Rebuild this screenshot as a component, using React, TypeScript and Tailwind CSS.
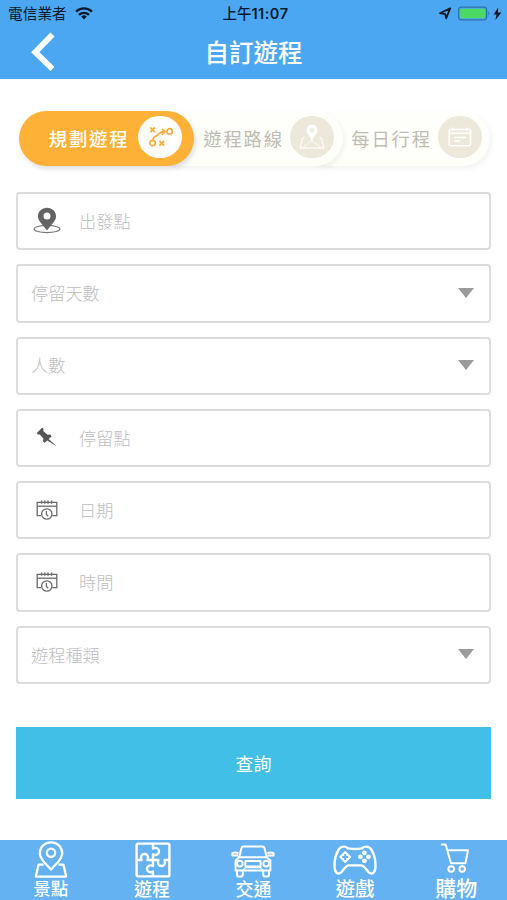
import React from 'react';

const BackIcon = () => (
  <svg width="24" height="40" viewBox="0 0 24 40" fill="none" stroke="white" strokeWidth="5.8">
    <path d="M21.5 2.5 L4.2 20.2 L21.5 37" />
  </svg>
);

const WifiIcon = () => (
  <svg width="18" height="13" viewBox="0 0 18 13" fill="none" stroke="#0b1a2a" strokeWidth="2.3">
    <path d="M1 4.6 A11.5 11.5 0 0 1 17 4.6" />
    <path d="M4 7.8 A7.2 7.2 0 0 1 14 7.8" />
    <path d="M9 12.4 L6.2 9.6 A4 4 0 0 1 11.8 9.6 Z" fill="#0b1a2a" stroke="none" />
  </svg>
);

const StatusIcons = () => (
  <svg width="64" height="16" viewBox="0 0 64 16">
    <path d="M1 7.2 L11.2 2.4 L7.2 12.2 L6.2 8.2 Z" fill="none" stroke="#0b1a2a" strokeWidth="1.8" strokeLinejoin="round" />
    <rect x="19.6" y="1.2" width="28" height="12.6" rx="2.8" fill="none" stroke="#2f6fa8" strokeWidth="1.2" />
    <rect x="21.2" y="2.8" width="24.8" height="9.4" rx="1.2" fill="#4cd964" />
    <path d="M49.4 5.4 Q51.4 7.5 49.4 9.6 Z" fill="#2f6fa8" />
    <path d="M59.2 1.4 L54.6 8.5 H57.6 L56.4 14 L62.4 6.6 H58.9 Z" fill="#0b1a2a" />
  </svg>
);

const RouteIcon = () => (
  <svg width="26" height="22" viewBox="0 0 26 22" fill="none" stroke="#fbab35" strokeWidth="1.7">
    <path d="M3.2 1.4 L8 6.2 M8 1.4 L3.2 6.2" />
    <path d="M12.4 14.9 L17.2 19.7 M17.2 14.9 L12.4 19.7" />
    <circle cx="22.6" cy="5.4" r="2.7" />
    <circle cx="5.6" cy="17" r="2.7" />
    <path d="M5.8 13.8 C6.4 9.6 9 10.6 11 8.6 C12.6 6.4 14 5.6 17.8 5.6" />
    <path d="M15 2.8 L18 5.6 L15 8.6" />
  </svg>
);

const MapPinIcon = () => (
  <svg width="26" height="26" viewBox="0 0 26 26" fill="none">
    <path d="M5.5 13 L3.6 14 L1.2 24 H24.8 L22.4 14 L20.5 13" stroke="white" strokeWidth="1.1" />
    <path d="M4 23.5 L12.6 16.5 L22 23.5" stroke="white" strokeWidth="0.7" />
    <path
      fillRule="evenodd"
      d="M13 0.8 C10 0.8 7.6 3 7.6 6 C7.6 9.8 11.6 12.4 13 17.4 C14.4 12.4 18.4 9.8 18.4 6 C18.4 3 16 0.8 13 0.8 Z M13 4 A2.2 2.2 0 1 1 13 8.4 A2.2 2.2 0 1 1 13 4 Z"
      fill="white"
    />
  </svg>
);

const ScheduleIcon = () => (
  <svg width="24" height="20" viewBox="0 0 24 20" fill="none" stroke="white" strokeWidth="1.5">
    <rect x="1.2" y="2.4" width="21.4" height="16.4" rx="1.2" />
    <path d="M1.2 6.3 H22.6 M5 0.4 V4 M18.8 0.4 V4" />
    <path d="M6.4 10.6 H18 M6.4 14 H12.6" />
  </svg>
);

const LocationIcon = () => (
  <svg width="28" height="27" viewBox="0 0 28 27">
    <ellipse cx="14" cy="22" rx="13" ry="3.6" fill="none" stroke="#777" strokeWidth="1.1" />
    <path
      fillRule="evenodd"
      d="M14 0.8 C8.8 0.8 5 4.6 5 9.4 C5 14 10 17.4 14 23.6 C18 17.4 23 14 23 9.4 C23 4.6 19.2 0.8 14 0.8 Z M14 5.4 A3.5 3.5 0 1 1 14 12.4 A3.5 3.5 0 1 1 14 5.4 Z"
      fill="#636363"
    />
  </svg>
);

const PushpinIcon = () => (
  <svg width="22" height="20" viewBox="0 0 22 20" fill="#555">
    <path d="M6.4 0.6 L7.6 2.4 L7.2 4 L11.6 7.8 L14.4 7.6 L15.6 9.4 L12.6 12 L20.4 19 L11.2 13.4 L8.6 15.8 L7 14.4 L7.4 11.6 L3.8 7.4 L1.8 7.4 L0.8 6 Z" />
  </svg>
);

const CalendarClockIcon = () => (
  <svg width="22" height="20" viewBox="0 0 22 20" fill="none" stroke="#6b6b6b" strokeWidth="1.3">
    <path d="M5 15.6 H1.2 V2.4 H20.8 V15.6 H16.4" />
    <path d="M1.2 6.2 H20.8" />
    <path d="M5.6 0.6 V3.8 M8.8 0.6 V3.8 M12 0.6 V3.8 M15.6 0.6 V3.8" strokeWidth="1.4" />
    <circle cx="10.8" cy="14" r="5.2" />
    <path d="M10.4 11 V14.4 L12.2 16.2" />
  </svg>
);

const SpotIcon = () => (
  <svg width="34" height="38" viewBox="0 0 34 38" fill="none" stroke="white" strokeWidth="2.3" strokeLinejoin="round">
    <path d="M17 28.6 C12 22.4 5.8 18.8 5.8 12.2 C5.8 6 10.6 1.4 17 1.4 C23.4 1.4 28.2 6 28.2 12.2 C28.2 18.8 22 22.4 17 28.6 Z" />
    <circle cx="17" cy="11.8" r="4.2" />
    <path d="M9.6 23.6 H4.6 L1.8 35.6 H32.2 L29.4 23.6 H24.4" />
  </svg>
);

const PuzzleIcon = () => (
  <svg width="36" height="36" viewBox="0 0 36 36" fill="none" stroke="white" strokeWidth="2.4" strokeLinejoin="round">
    <rect x="1.6" y="1.6" width="32.8" height="32.8" rx="1.4" />
    <path d="M18 1.6 V6.6 C21 4.8 24 6.6 24 9.4 C24 12.4 21 13.8 18 12.4 V18" />
    <path d="M1.6 18 H6.6 C5 14.6 6.8 12 9.4 12 C12.4 12 14 14.6 12.4 18 H23.4 C22 21.4 23.8 24 26.6 24 C29.4 24 31 21.4 29.4 18 H34.4" />
    <path d="M18 18 V24 C15 22.4 12 24 12 26.8 C12 29.8 15 31.2 18 29.6 V34.4" />
  </svg>
);

const CarIcon = () => (
  <svg width="44" height="33" viewBox="0 0 44 33" fill="none" stroke="white" strokeWidth="2" strokeLinejoin="round">
    <path d="M8.2 12.2 L10.6 2.8 Q11 1.4 12.6 1.4 H31.4 Q33 1.4 33.4 2.8 L35.8 12.2" />
    <path d="M8.2 12.2 H35.8 L39.4 15.4 V25.4 H4.6 V15.4 Z" />
    <path d="M7.6 8.4 Q4.4 6.6 1.4 8.2 V10.6 H7.4 M36.4 8.4 Q39.6 6.6 42.6 8.2 V10.6 H36.6" />
    <circle cx="8.8" cy="18.6" r="2.9" />
    <circle cx="35.2" cy="18.6" r="2.9" />
    <rect x="14.4" y="16" width="15.2" height="5.4" />
    <path d="M12 25.2 L14.6 22.6 H29.4 L32 25.2" strokeWidth="1.2" />
    <path d="M6 25.4 V29.4 Q6 31.6 8.8 31.6 Q11.8 31.6 11.8 29.4 V25.4 M32.2 25.4 V29.4 Q32.2 31.6 35.2 31.6 Q38 31.6 38 29.4 V25.4" />
  </svg>
);

const GamepadIcon = () => (
  <svg width="44" height="30" viewBox="0 0 44 30" fill="none" stroke="white" strokeWidth="2.4" strokeLinejoin="round">
    <path d="M15 3.4 Q22 4.6 29 3.4 C31.4 0.8 35.6 1 38 4 C41.2 9 42.8 17 42.4 22.6 C42 28 38.8 29.8 35.8 27.4 C33 24.6 31.6 20.6 28 20.4 H16 C12.4 20.6 11 24.6 8.2 27.4 C5.2 29.8 2 28 1.6 22.6 C1.2 17 2.8 9 6 4 C8.4 1 12.6 0.8 15 3.4 Z" />
    <path d="M12.2 6.8 L17.4 12 L12.2 17.2 L7 12 Z" fill="white" strokeWidth="1.6" />
    <path d="M12.2 9 V15 M9.2 12 H15.2" stroke="#64b2f1" strokeWidth="2" />
    <g fill="white" stroke="none">
      <circle cx="31.4" cy="7.8" r="2.4" />
      <circle cx="31.4" cy="15.8" r="2.4" />
      <circle cx="27.4" cy="11.8" r="2.4" />
      <circle cx="35.4" cy="11.8" r="2.4" />
    </g>
  </svg>
);

const CartIcon = () => (
  <svg width="30" height="30" viewBox="0 0 30 30" fill="none" stroke="white" strokeWidth="2" strokeLinejoin="round">
    <path d="M1 1.4 H5.6 L11 20.2 H25.4 L28 7.2 H7.4" />
    <circle cx="11.2" cy="26" r="2.8" />
    <circle cx="22.2" cy="26" r="2.8" />
  </svg>
);

const tabs = [
  { label: '規劃遊程', icon: <RouteIcon />, className: 'z-20 w-[175px] pr-3 gap-[8.5px] font-medium bg-[#fdb136] text-white shadow-[2px_3px_5px_rgba(0,0,0,0.13)]', circle: 'bg-white' },
  { label: '遊程路線', icon: <MapPinIcon />, className: 'z-10 -ml-10 w-[189px] pr-[9px] gap-[6px] bg-[#fefefb] text-[#bfbcb2] shadow-[2px_3px_5px_rgba(0,0,0,0.05)]', circle: 'bg-[#ece9da]' },
  { label: '每日行程', icon: <ScheduleIcon />, className: '-ml-10 w-[187px] pr-2 gap-[6px] bg-[#fefefb] text-[#bfbcb2] shadow-[2px_3px_5px_rgba(0,0,0,0.05)]', circle: 'bg-[#ece9da]' },
];

const fields = [
  { placeholder: '出發點', icon: <LocationIcon /> },
  { placeholder: '停留天數' },
  { placeholder: '人數' },
  { placeholder: '停留點', icon: <PushpinIcon /> },
  { placeholder: '日期', icon: <CalendarClockIcon /> },
  { placeholder: '時間', icon: <CalendarClockIcon /> },
  { placeholder: '遊程種類' },
];

const navItems = [
  { label: '景點', icon: <SpotIcon />, size: 'text-[17.5px]', pad: 'pl-0' },
  { label: '遊程', icon: <PuzzleIcon />, size: 'text-[18px]', pad: 'pl-px' },
  { label: '交通', icon: <CarIcon />, size: 'text-[18px]', pad: 'pt-[2px]' },
  { label: '遊戲', icon: <GamepadIcon />, size: 'text-[19.5px]', pad: 'pl-0' },
  { label: '購物', icon: <CartIcon />, size: 'text-[21px]', pad: 'pr-[3px] pb-[5px]' },
];

export default function App() {
  return (
    <div className="flex flex-col w-full h-[900px] bg-white overflow-hidden font-['Noto_Sans_CJK_TC',sans-serif]">
      {/* Header */}
      <header className="h-[79px] shrink-0 bg-[#4ca7f2]">
        <div className="grid grid-cols-[1fr_auto_1fr] items-center h-[27px] pl-2 pr-1 text-[#0b1a2a]">
          <div className="flex items-center gap-2 text-[14.7px] leading-none">
            <span>電信業者</span>
            <WifiIcon />
          </div>
          <div className="text-[14.5px] leading-none font-medium">
            上午<span className="font-['Inter',sans-serif] font-semibold tracking-[0.5px]">11:07</span>
          </div>
          <div className="flex justify-end">
            <StatusIcons />
          </div>
        </div>
        <div className="grid grid-cols-[1fr_auto_1fr] items-center h-[50px]">
          <button className="pl-[31px]" aria-label="返回">
            <BackIcon />
          </button>
          <h1 className="text-[24.5px] leading-none font-medium text-white">自訂遊程</h1>
        </div>
      </header>

      {/* Tabs */}
      <div className="flex shrink-0 mt-8 ml-[19px]">
        {tabs.map((tab) => (
          <button
            key={tab.label}
            className={`relative flex items-center justify-end h-[55px] rounded-full ${tab.className}`}
          >
            <span className="text-[18.4px] leading-none tracking-[1.8px] whitespace-nowrap">{tab.label}</span>
            <span className={`flex items-center justify-center w-11 h-[42px] -mt-[3px] shrink-0 rounded-full ${tab.circle}`}>
              {tab.icon}
            </span>
          </button>
        ))}
      </div>

      {/* Form */}
      <div className="flex flex-col shrink-0 gap-[14px] mt-[26px] px-4">
        {fields.map((field) => (
          <div
            key={field.placeholder}
            className="flex items-center h-[58.3px] pl-[13px] pr-[15px] pb-[1.5px] border-2 border-[#dcdcdc] rounded-[4px]"
          >
            {field.icon && <span className="flex justify-center w-8 mr-4">{field.icon}</span>}
            <span className="text-[17.2px] leading-none font-light text-[#bdbdc1]">{field.placeholder}</span>
            {!field.icon && (
              <svg className="ml-auto" width="16" height="10" viewBox="0 0 16 10">
                <path d="M0 0 H16 L8 10 Z" fill="#9b9b9b" />
              </svg>
            )}
          </div>
        ))}
      </div>

      <button className="shrink-0 h-[72px] mt-[43px] mx-4 bg-[#41bfe7] text-white text-[18px] leading-none">
        查詢
      </button>

      {/* Bottom navigation */}
      <nav className="grid grid-cols-5 shrink-0 h-[60px] mt-auto bg-[#64b2f1]">
        {navItems.map((item) => (
          <button key={item.label} className="flex flex-col items-center text-white">
            <span className={`flex items-center justify-center h-[38px] mt-px ${item.pad}`}>{item.icon}</span>
            <span className={`flex items-center h-[17px] leading-none font-medium ${item.size}`}>{item.label}</span>
          </button>
        ))}
      </nav>
    </div>
  );
}
